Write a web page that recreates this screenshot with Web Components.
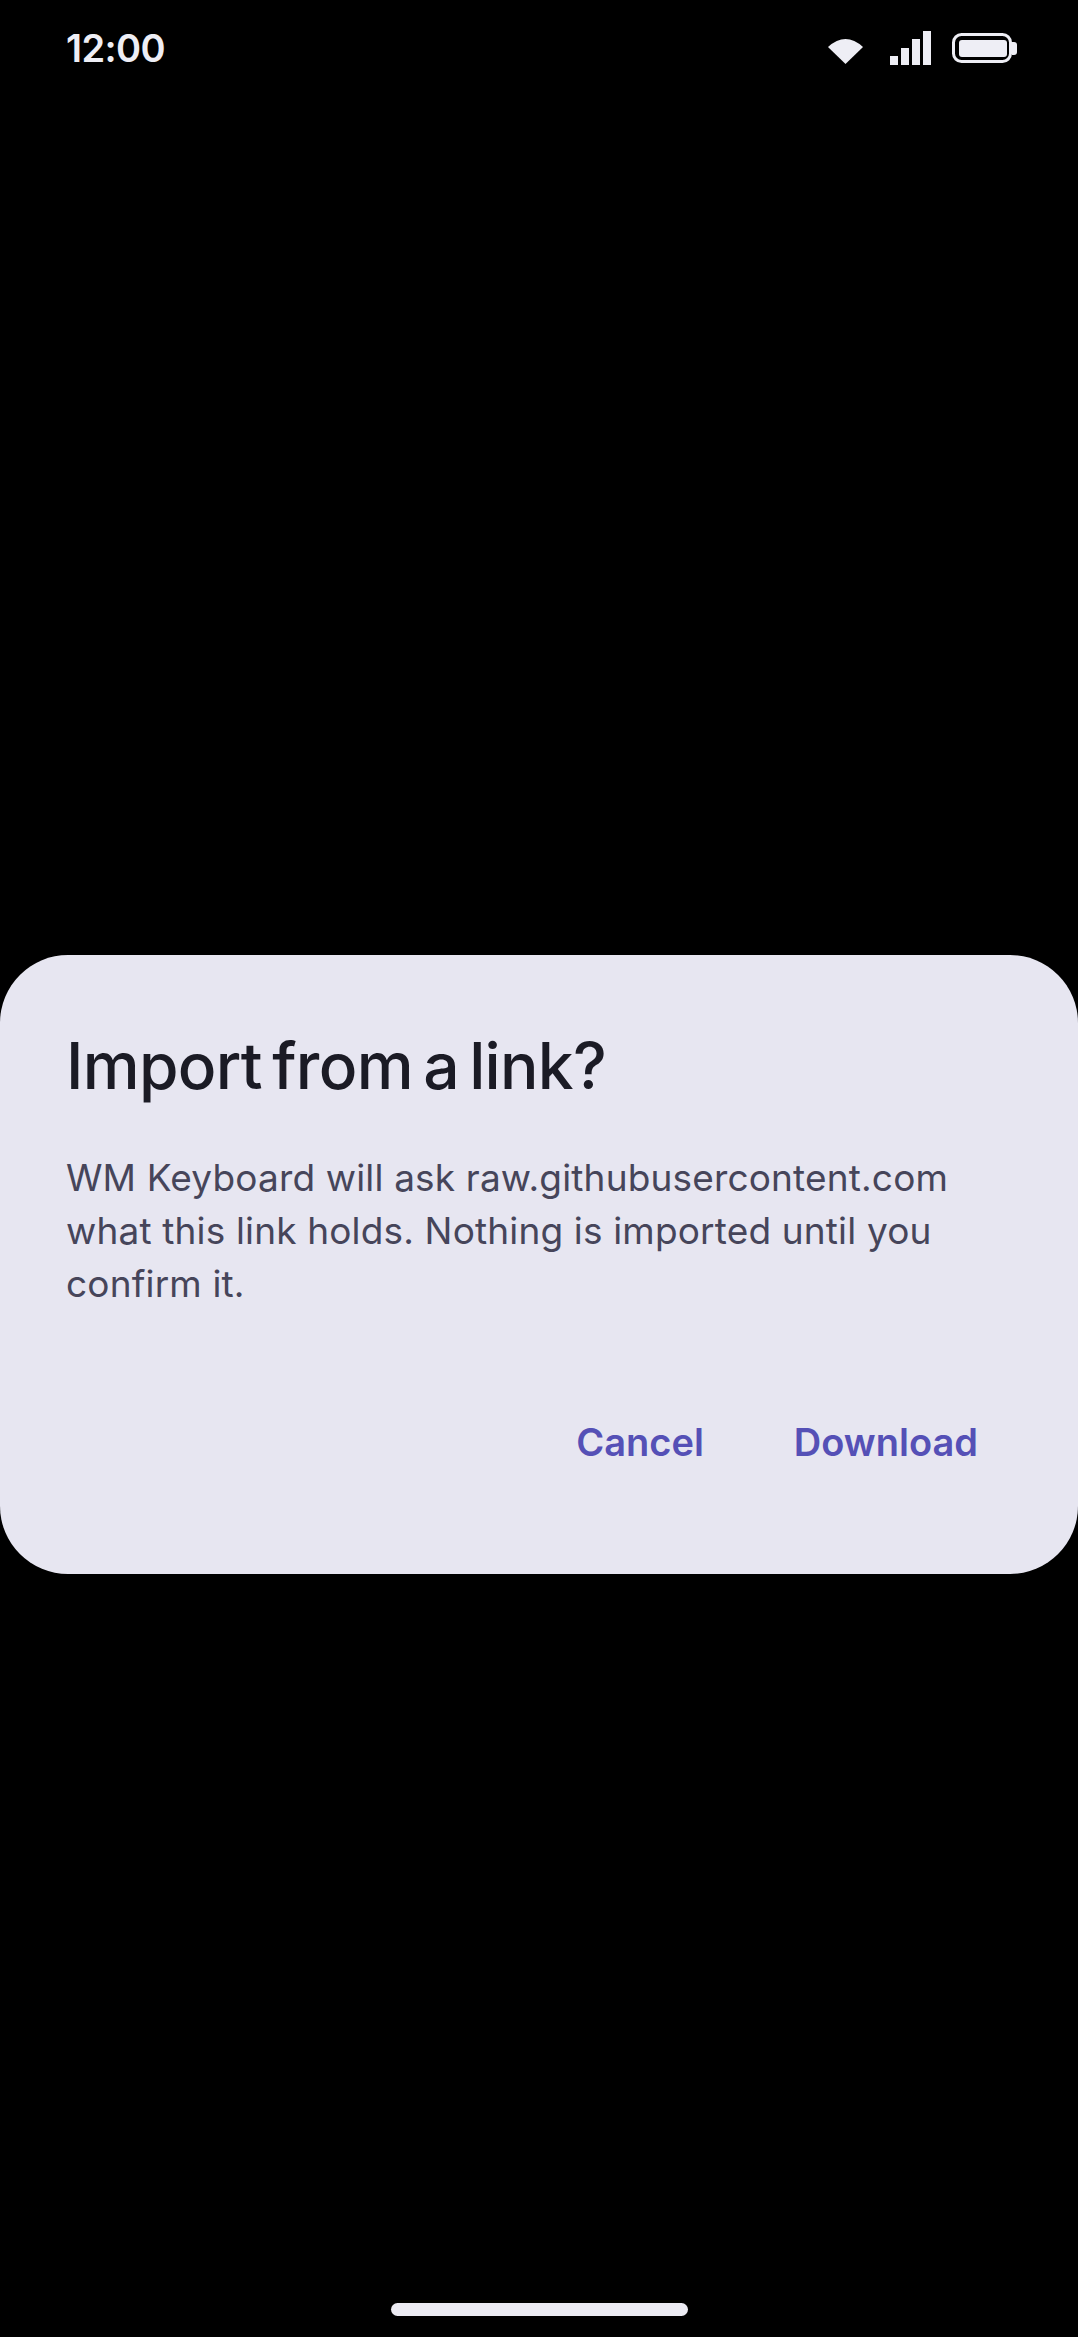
<!DOCTYPE html>
<html>
<head>
<meta charset="utf-8">
<title>Import from a link?</title>
<style>
	html, body { margin: 0; background: #000; }
</style>
</head>
<body>
<phone-screen>
	<status-bar slot="top" time="12:00"></status-bar>
	<confirm-dialog heading="Import from a link?">
		WM Keyboard will ask raw.githubusercontent.com what this link holds. Nothing is imported until you confirm it.
		<dialog-action slot="actions">Cancel</dialog-action>
		<dialog-action slot="actions">Download</dialog-action>
	</confirm-dialog>
	<gesture-bar slot="bottom"></gesture-bar>
</phone-screen>

<script>
const
	define = (name, css, html, init) => customElements.define(name, class extends HTMLElement {
		constructor() {
			super();
			this.attachShadow({ mode: 'open' }).innerHTML = `<style>${css}</style>${html}`;
			if (init) init(this);
		}
	});

define('phone-screen', `
	:host {
		display: flex;
		flex-direction: column;
		width: 1078px;
		height: 2337px;
		background: #000;
		overflow: hidden;
	}
	main { flex: 1; padding-top: 859px; }
`, `
	<slot name="top"></slot>
	<main><slot></slot></main>
	<slot name="bottom"></slot>
`);

define('status-bar', `
	:host {
		display: flex;
		justify-content: space-between;
		align-items: flex-start;
		height: 96px;
		padding: 0 61px 0 66px;
		box-sizing: border-box;
		color: #eeeef5;
		font: 600 38px/46px Inter, sans-serif;
	}
	.time { margin-top: 25px; letter-spacing: -.6px; }
	svg { display: block; margin-top: 26px; }
`, `
	<span class="time"></span>
	<svg width="190" height="44" viewBox="0 0 190 44" fill="#eeeef5">
		<path d="M1 21 Q18.5 5 36 21 L18.5 38 Z" />
		<rect x="63" y="30" width="8" height="9" />
		<rect x="74" y="22" width="8" height="17" />
		<rect x="85" y="13" width="8" height="26" />
		<rect x="96" y="5" width="8" height="34" />
		<rect x="126.5" y="8.5" width="57" height="27" rx="8" fill="none" stroke="#eeeef5" stroke-width="3" />
		<rect x="132" y="14" width="48" height="17" rx="3" />
		<path d="M185 16 h2 a3 3 0 0 1 3 3 v7 a3 3 0 0 1 -3 3 h-2 Z" />
	</svg>
`, el => {
	el.shadowRoot.querySelector('.time').textContent = el.getAttribute('time');
});

define('confirm-dialog', `
	:host {
		display: block;
		height: 619px;
		padding: 72px 66px 0;
		box-sizing: border-box;
		background: #e7e6f1;
		border-radius: 68px;
	}
	h2 {
		margin: 0;
		color: #1b1b25;
		font: 500 64px/78px Inter, sans-serif;
		letter-spacing: -0.7px;
		word-spacing: -6px;
	}
	p {
		margin: 46px 0 0;
		color: #46455a;
		font: 400 37px/53.2px Inter, sans-serif;
		letter-spacing: .16px;
	}
	.actions {
		display: flex;
		justify-content: flex-end;
		gap: 90px;
		margin: 106px 34px 0 0;
	}
`, `
	<h2></h2>
	<p><slot></slot></p>
	<div class="actions"><slot name="actions"></slot></div>
`, el => {
	el.shadowRoot.querySelector('h2').textContent = el.getAttribute('heading');
});

define('dialog-action', `
	:host {
		display: block;
		color: #5550b6;
		font: 600 38px/50px Inter, sans-serif;
	}
`, `<slot></slot>`);

define('gesture-bar', `
	:host {
		display: flex;
		justify-content: center;
		height: 34px;
	}
	div {
		width: 297px;
		height: 13px;
		border-radius: 7px;
		background: #ecebf3;
	}
`, `<div></div>`);
</script>
</body>
</html>
